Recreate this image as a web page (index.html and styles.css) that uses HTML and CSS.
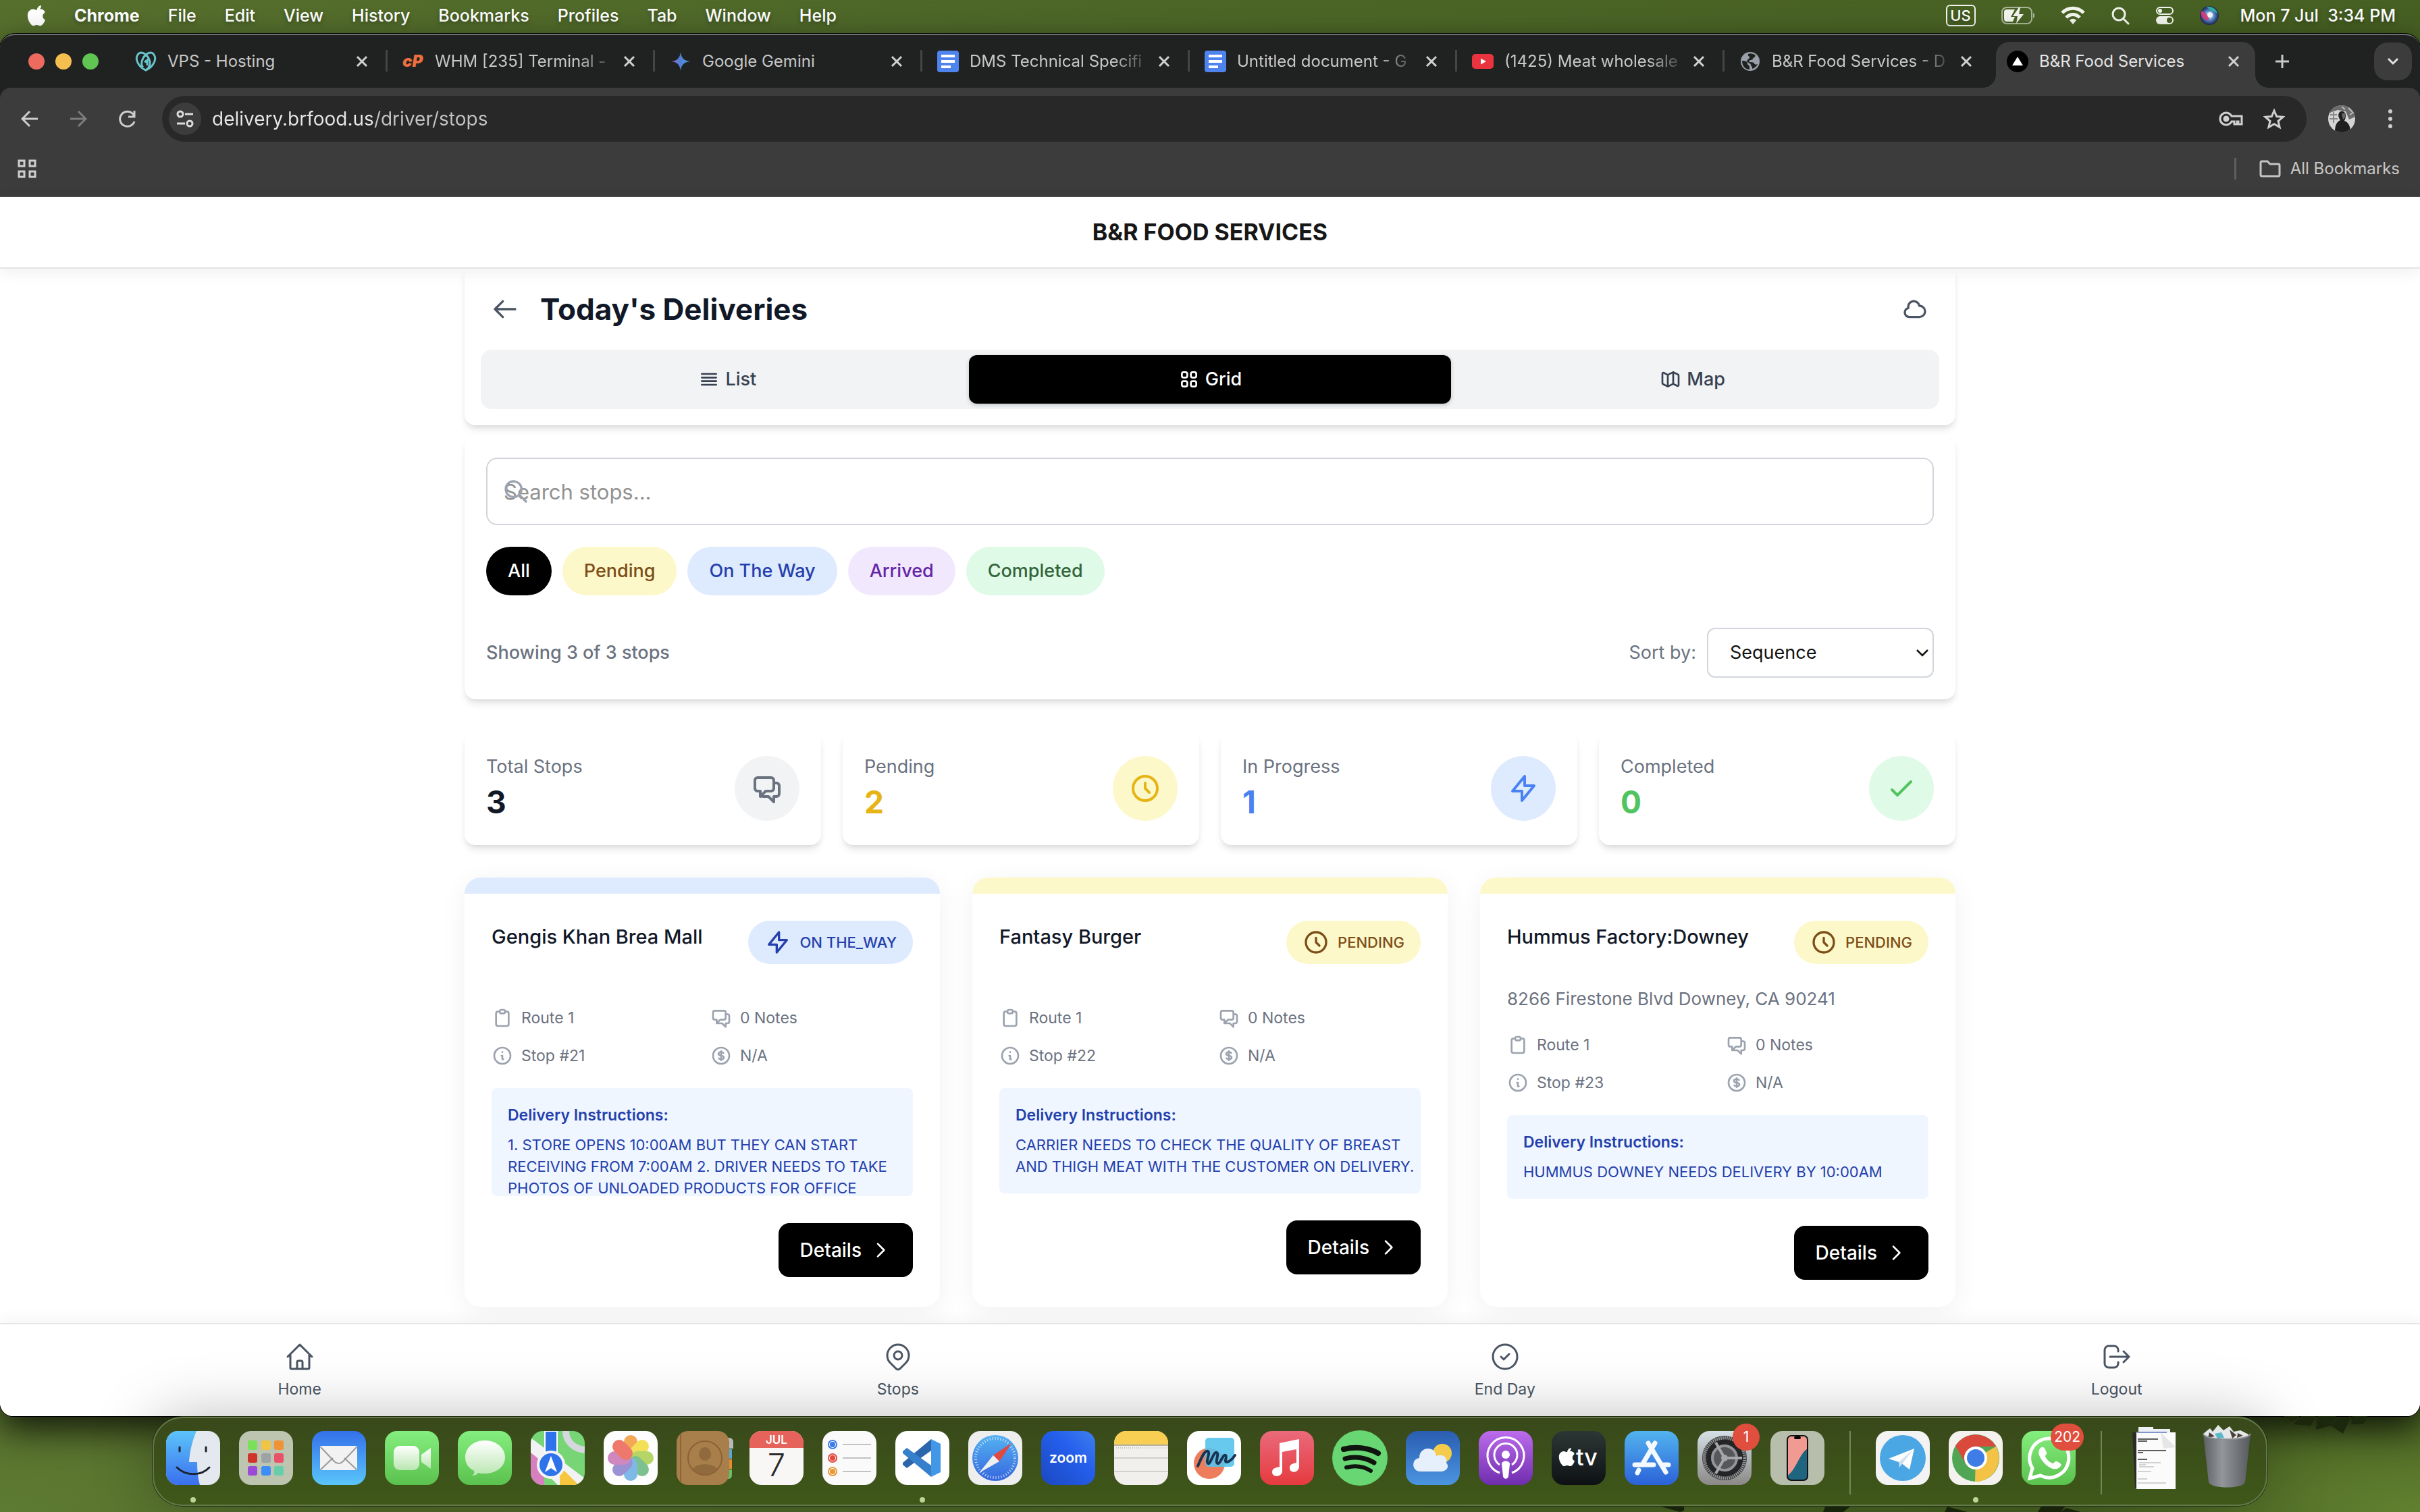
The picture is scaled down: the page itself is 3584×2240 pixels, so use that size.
FILE: index.html
```html
<!DOCTYPE html>
<html lang="en">
<head>
<meta charset="utf-8">
<meta name="viewport" content="width=device-width, initial-scale=1">
<title>B&amp;R Food Services</title>
<link rel="stylesheet" href="styles.css">
</head>
<body>
<svg class="defs" aria-hidden="true">
  <symbol id="i-close" viewBox="0 0 24 24"><path d="M5 5l14 14M19 5L5 19"/></symbol>
  <symbol id="i-chat" viewBox="0 0 24 24"><path d="M17 8h2a2 2 0 012 2v6a2 2 0 01-2 2h-2v4l-4-4H9a1.994 1.994 0 01-1.414-.586m0 0L11 14h4a2 2 0 002-2V6a2 2 0 00-2-2H5a2 2 0 00-2 2v6a2 2 0 002 2h2v4l.586-.586z"/></symbol>
  <symbol id="i-bolt" viewBox="0 0 24 24"><path d="M13 10V3L4 14h7v7l9-11h-7z"/></symbol>
  <symbol id="i-clock" viewBox="0 0 24 24"><path d="M12 8v4l3 3m6-3a9 9 0 11-18 0 9 9 0 0118 0z"/></symbol>
  <symbol id="i-clip" viewBox="0 0 24 24"><path d="M9 5H7a2 2 0 00-2 2v12a2 2 0 002 2h10a2 2 0 002-2V7a2 2 0 00-2-2h-2M9 5a2 2 0 002 2h2a2 2 0 002-2M9 5a2 2 0 012-2h2a2 2 0 012 2"/></symbol>
  <symbol id="i-info" viewBox="0 0 24 24"><path d="M13 16h-1v-4h-1m1-4h.01M21 12a9 9 0 11-18 0 9 9 0 0118 0z"/></symbol>
  <symbol id="i-dollar" viewBox="0 0 24 24"><path d="M12 8c-1.657 0-3 .895-3 2s1.343 2 3 2 3 .895 3 2-1.343 2-3 2m0-8c1.11 0 2.08.402 2.599 1M12 8V7m0 1v8m0 0v1m0-1c-1.11 0-2.08-.402-2.599-1M21 12a9 9 0 11-18 0 9 9 0 0118 0z"/></symbol>
  <symbol id="i-next" viewBox="0 0 24 24"><path d="M9 5l7 7-7 7"/></symbol>
  <symbol id="i-docs" viewBox="0 0 32 32"><rect width="32" height="32" rx="4" fill="#4f83ee"/><path d="M6 8h20M6 16h20M6 24h14" stroke="#fff" stroke-width="4"/></symbol>
  <symbol id="i-apple" viewBox="0 0 28 32"><path d="M19.4 0c.2 1.900-.5 3.700-1.600 5-1.100 1.400-2.900 2.400-4.600 2.300-.2-1.800.7-3.700 1.700-4.900C16 1.100 17.900.1 19.400 0zM24.700 10.900c-1.900 1.200-2.900 2.900-2.900 5.100 0 2.500 1.400 4.600 3.700 5.500-.5 1.600-1.300 3.200-2.200 4.600-1.400 2-2.800 4-5 4.100-2.100 0-2.800-1.300-5.200-1.300s-3.200 1.200-5.200 1.300c-2.100.1-3.700-2.200-5.100-4.200C0 22 -2.200 14.400.7 9.500 2.100 7 4.700 5.500 7.500 5.400c2 0 4 1.400 5.200 1.400s3.600-1.700 6.100-1.400c1 0 3.900.4 5.900 3.200z" transform="translate(1.500 1)"/></symbol>
</svg>

<header class="menubar">
  <nav class="menus" aria-label="Application menu">
    <svg class="apple" viewBox="0 0 28 32"><use href="#i-apple"/></svg>
    <span class="app-name">Chrome</span><span>File</span><span>Edit</span><span>View</span><span>History</span><span>Bookmarks</span><span>Profiles</span><span>Tab</span><span>Window</span><span>Help</span>
  </nav>
  <div class="status">
    <span class="input-source">US</span>
    <svg width="50" height="26" viewBox="0 0 50 26" fill="none"><rect x="1" y="1" width="44" height="24" rx="7" stroke="#a9b696" stroke-width="2"/><path d="M47 9c3 1 3 7 0 8z" fill="#a9b696"/><path d="M8 4h12l-6 11h6l-3 7H8a4 4 0 01-4-4V8a4 4 0 014-4z" fill="#f2f4ee"/><path d="M26 1L17 14h7l-2 11 11-14h-7l2-10z" fill="#f2f4ee"/></svg>
    <svg width="36" height="28" viewBox="0 0 36 28" fill="none" stroke="#f2f4ee" stroke-width="5"><path d="M2 10c9-9 23-9 32 0M8 17c6-6 14-6 20 0"/><path d="M18 27l-5-6c3-3 7-3 10 0z" fill="#f2f4ee" stroke="none"/></svg>
    <svg width="28" height="28" viewBox="0 0 28 28" fill="none" stroke="#f2f4ee" stroke-width="3" stroke-linecap="round"><circle cx="12" cy="12" r="9"/><path d="M19 19l7 7"/></svg>
    <svg width="28" height="28" viewBox="0 0 28 28" fill="none"><rect x="2" y="2" width="24" height="10" rx="5" stroke="#f2f4ee" stroke-width="2"/><circle cx="7" cy="7" r="3" fill="#f2f4ee"/><rect x="1" y="15" width="26" height="12" rx="6" fill="#f2f4ee"/><circle cx="21" cy="21" r="4" fill="#47601f"/></svg>
    <svg width="28" height="28" viewBox="0 0 28 28"><defs><radialGradient id="siri"><stop offset="0" stop-color="#fff"/><stop offset=".35" stop-color="#7fb6e0"/><stop offset=".7" stop-color="#3b5fa0"/><stop offset="1" stop-color="#23264a"/></radialGradient></defs><circle cx="14" cy="14" r="14" fill="url(#siri)"/><path d="M2 7c7 2 11 7 12 14-7 1-14-4-12-14z" fill="#d63b7c" opacity=".9"/><path d="M10 1c8-1 15 4 16 10-6-4-11-4-16-10z" fill="#33b6a5" opacity=".9"/><circle cx="15" cy="13" r="4" fill="#fff" opacity=".8"/></svg>
    <time class="clock">Mon 7 Jul&nbsp; 3:34 PM</time>
  </div>
</header>

<div class="window">
  <div class="tabstrip">
    <div class="lights"><i class="red"></i><i class="amber"></i><i class="green"></i></div>
    <div class="tab"><svg class="favicon" viewBox="0 0 32 32" fill="none" stroke="#67c4cc" stroke-width="3"><path d="M16 29C6 25-1 13 4 6c4-6 12-2 16 5 3 6 3 13-4 18zM16 29c10-4 17-16 12-23-4-6-12-2-16 5-3 6-3 11 0 14M14 17l4-3v8"/></svg><span class="tab-title">VPS - Hosting</span><button class="tab-close" aria-label="Close tab"><svg><use href="#i-close"/></svg></button></div>
    <div class="tab"><span class="favicon cpanel">cP</span><span class="tab-title fade">WHM [235] Terminal -</span><button class="tab-close" aria-label="Close tab"><svg><use href="#i-close"/></svg></button></div>
    <div class="tab"><svg class="favicon" viewBox="0 0 32 32"><defs><linearGradient id="gem"><stop offset="0" stop-color="#9067c9"/><stop offset=".5" stop-color="#4f82d8"/><stop offset="1" stop-color="#4fa0d8"/></linearGradient></defs><path d="M16 2c1 9 5 13 14 14-9 1-13 5-14 14C15 21 11 17 2 16c9-1 13-5 14-14z" fill="url(#gem)"/></svg><span class="tab-title">Google Gemini</span><button class="tab-close" aria-label="Close tab"><svg><use href="#i-close"/></svg></button></div>
    <div class="tab"><svg class="favicon"><use href="#i-docs"/></svg><span class="tab-title fade">DMS Technical Specifi</span><button class="tab-close" aria-label="Close tab"><svg><use href="#i-close"/></svg></button></div>
    <div class="tab"><svg class="favicon"><use href="#i-docs"/></svg><span class="tab-title fade">Untitled document - G</span><button class="tab-close" aria-label="Close tab"><svg><use href="#i-close"/></svg></button></div>
    <div class="tab"><svg class="favicon" viewBox="0 0 32 32"><rect y="5" width="32" height="22" rx="5" fill="#e9333f"/><path d="M13 11.500v9l8-4.500z" fill="#fff"/></svg><span class="tab-title fade">(1425) Meat wholesale</span><button class="tab-close" aria-label="Close tab"><svg><use href="#i-close"/></svg></button></div>
    <div class="tab tab-last"><svg class="favicon" viewBox="0 0 32 32"><circle cx="16" cy="16" r="14" fill="#9aa0a9"/><path d="M4 15c5 0 8 1 8 4s3 2 3 5v4C9 28 4 23 4 15zM13 5c3-2 8 0 10 1 2 3-2 4-3 6-1 3-5 1-6 4 2 2 6 0 8 3s4 1 5 1c-2 4-5 6-8 7 1-3-2-4-2-6s-4-3-6-5c0-3 5-4 4-7-1-1-3-1-2-4z" fill="#202221"/></svg><span class="tab-title fade">B&amp;R Food Services - D</span><button class="tab-close" aria-label="Close tab"><svg><use href="#i-close"/></svg></button></div>
    <div class="tab tab-active"><svg class="favicon" viewBox="0 0 32 32"><circle cx="16" cy="16" r="16" fill="#000"/><path d="M16 9l8 13H8z" fill="#fff"/></svg><span class="tab-title">B&amp;R Food Services</span><button class="tab-close" aria-label="Close tab"><svg><use href="#i-close"/></svg></button></div>
    <button class="new-tab" aria-label="New tab"><svg width="22" height="22" viewBox="0 0 22 22"><path d="M11 1v20M1 11h20" stroke="#c9c9c9" stroke-width="3"/></svg></button>
    <button class="tab-search" aria-label="Search tabs"><svg width="18" height="12" viewBox="0 0 18 12" fill="none"><path d="M2 2l7 7 7-7" stroke="#e0e0e0" stroke-width="3"/></svg></button>
  </div>

  <div class="toolbar">
    <div class="address-row">
      <button class="tool" aria-label="Back"><svg width="26" height="26" viewBox="0 0 26 26"><path d="M25 13H3M13 2L2 13l11 11"/></svg></button>
      <button class="tool dim" aria-label="Forward"><svg width="26" height="26" viewBox="0 0 26 26"><path d="M1 13h22M13 2l11 11-11 11"/></svg></button>
      <button class="tool" aria-label="Reload"><svg width="26" height="26" viewBox="0 0 26 26"><path d="M24 17A11 11 0 1122 6l2 3M24 1v9h-9"/></svg></button>
      <div class="omnibox">
        <button class="site-info" aria-label="Site information"><svg width="26" height="26" viewBox="0 0 26 26" fill="none" stroke="#dcdcdc" stroke-width="3"><circle cx="6" cy="6" r="4"/><path d="M13 6h12M1 20h12"/><circle cx="20" cy="20" r="4"/></svg></button>
        <input class="url" type="text" aria-label="Address" value="delivery.brfood.us/driver/stops">
        <button class="plain" aria-label="Passwords"><svg width="36" height="24" viewBox="0 0 36 24" fill="none" stroke="#cfcfcf" stroke-width="3"><path d="M19 8A9 9 0 1019 16h4v4h4v-4h2v4h5V8z"/><circle cx="11" cy="12" r="3" fill="#cfcfcf"/></svg></button>
        <button class="plain" aria-label="Bookmark this page"><svg width="32" height="32" viewBox="0 0 32 32" fill="none" stroke="#cfcfcf" stroke-width="3"><path d="M16 4l3.700 8.500 9.300.8-7 6.100 2.100 9.100L16 23.700l-8.100 4.800L10 19.400l-7-6.100 9.300-.8z"/></svg></button>
      </div>
      <button class="plain avatar" aria-label="Profile"><svg width="40" height="40" viewBox="0 0 40 40"><defs><clipPath id="av"><circle cx="20" cy="20" r="20"/></clipPath></defs><g clip-path="url(#av)"><rect width="40" height="40" fill="#d4d4d4"/><path d="M0 0h40v17L31 21 26 9 14 7 0 12z" fill="#6c6c6c"/><path d="M3 14h10M2 20h12M8 10v16" stroke="#888" stroke-width="2"/><path d="M30 4l6 6M32 14l6-4M20 2l5 4" stroke="#bbb" stroke-width="2"/><path d="M10 40c0-10 2-15 8-18-3-4-4-9-1-12 4-3 9 0 9 5 0 3-1 6-2 8 6 2 9 8 9 17z" fill="#1f1f1f"/><path d="M20 12h5v6l-3 3z" fill="#6a6a6a"/></g></svg></button>
      <button class="plain" aria-label="Menu"><svg width="8" height="28" viewBox="0 0 8 28" fill="#cfcfcf"><circle cx="4" cy="3" r="3"/><circle cx="4" cy="14" r="3"/><circle cx="4" cy="25" r="3"/></svg></button>
    </div>
    <div class="bookmarks">
      <button class="plain" aria-label="Apps"><svg width="28" height="28" viewBox="0 0 28 28" fill="none" stroke="#cfcfcf" stroke-width="3"><path d="M2 2h8v8H2zM18 2h8v8h-8zM2 18h8v8H2zM18 18h8v8h-8z"/></svg></button>
      <button class="plain all-bookmarks"><svg width="32" height="26" viewBox="0 0 32 26" fill="none" stroke="#c4c4c4" stroke-width="3"><path d="M2 4a2 2 0 012-2h8l4 4h12a2 2 0 012 2v14a2 2 0 01-2 2H4a2 2 0 01-2-2z"/></svg>All Bookmarks</button>
    </div>
  </div>

  <div class="page">
    <header class="site-header"><span class="brand">B&amp;R FOOD SERVICES</span></header>

    <main class="content">
      <section class="panel heading">
        <div class="title-row">
          <a class="icon-link" href="#" aria-label="Back"><svg class="ico s40" viewBox="0 0 24 24"><path d="M10 19l-7-7m0 0l7-7m-7 7h18"/></svg></a>
          <h1>Today's Deliveries</h1>
          <svg class="ico s40" viewBox="0 0 24 24"><path d="M3 15a4 4 0 004 4h9a5 5 0 10-.1-9.999 5.002 5.002 0 10-9.780 2.096A4.001 4.001 0 003 15z"/></svg>
        </div>
        <div class="segments">
          <button class="segment"><svg class="ico s32" viewBox="0 0 24 24"><path d="M4 6h16M4 10h16M4 14h16M4 18h16"/></svg>List</button>
          <button class="segment on"><svg class="ico s32" viewBox="0 0 24 24"><path d="M4 6a2 2 0 012-2h2a2 2 0 012 2v2a2 2 0 01-2 2H6a2 2 0 01-2-2V6zM14 6a2 2 0 012-2h2a2 2 0 012 2v2a2 2 0 01-2 2h-2a2 2 0 01-2-2V6zM4 16a2 2 0 012-2h2a2 2 0 012 2v2a2 2 0 01-2 2H6a2 2 0 01-2-2v-2zM14 16a2 2 0 012-2h2a2 2 0 012 2v2a2 2 0 01-2 2h-2a2 2 0 01-2-2v-2z"/></svg>Grid</button>
          <button class="segment"><svg class="ico s32" viewBox="0 0 24 24"><path d="M9 20l-5.447-2.724A1 1 0 013 16.382V5.618a1 1 0 011.447-.894L9 7m0 13l6-3m-6 3V7m6 10l4.553 2.276A1 1 0 0021 18.382V7.618a1 1 0 00-.553-.894L15 4m0 13V4m0 0L9 7"/></svg>Map</button>
        </div>
      </section>

      <section class="panel filters">
        <div class="search">
          <input type="text" placeholder="Search stops..." aria-label="Search stops">
          <svg class="ico s40 search-icon" viewBox="0 0 24 24"><path d="M21 21l-6-6m2-5a7 7 0 11-14 0 7 7 0 0114 0z"/></svg>
        </div>
        <div class="chips">
          <button class="chip black">All</button><button class="chip yellow">Pending</button><button class="chip blue">On The Way</button><button class="chip purple">Arrived</button><button class="chip green">Completed</button>
        </div>
        <div class="sort-row">
          <span class="showing">Showing 3 of 3 stops</span>
          <label for="sort">Sort by:</label>
          <div class="select"><select id="sort"><option>Sequence</option><option>Name</option><option>Status</option></select><svg width="20" height="14" viewBox="0 0 20 14" fill="none"><path d="M2 3l8 8 8-8" stroke="#111" stroke-width="2.500"/></svg></div>
        </div>
      </section>

      <section class="stats">
        <div class="panel stat"><div><p>Total Stops</p><strong>3</strong></div><span class="bubble gray"><svg class="ico s48"><use href="#i-chat"/></svg></span></div>
        <div class="panel stat"><div><p>Pending</p><strong class="t-yellow">2</strong></div><span class="bubble b-yellow"><svg class="ico s48"><use href="#i-clock"/></svg></span></div>
        <div class="panel stat"><div><p>In Progress</p><strong class="t-blue">1</strong></div><span class="bubble b-blue"><svg class="ico s48"><use href="#i-bolt"/></svg></span></div>
        <div class="panel stat"><div><p>Completed</p><strong class="t-green">0</strong></div><span class="bubble b-green"><svg class="ico s48" viewBox="0 0 24 24"><path d="M5 13l4 4L19 7"/></svg></span></div>
      </section>

      <section class="cards">
        <article class="card way">
          <div class="card-head"><h2>Gengis Khan Brea Mall</h2><span class="badge blue"><svg class="ico s40"><use href="#i-bolt"/></svg>ON THE_WAY</span></div>
          <p class="address"></p>
          <ul class="facts"><li><svg class="ico s32"><use href="#i-clip"/></svg>Route 1</li><li><svg class="ico s32"><use href="#i-chat"/></svg>0 Notes</li><li><svg class="ico s32"><use href="#i-info"/></svg>Stop #21</li><li><svg class="ico s32"><use href="#i-dollar"/></svg>N/A</li></ul>
          <div class="instructions"><h3>Delivery Instructions:</h3><p>1. STORE OPENS 10:00AM BUT THEY CAN START<br>RECEIVING FROM 7:00AM 2. DRIVER NEEDS TO TAKE<br>PHOTOS OF UNLOADED PRODUCTS FOR OFFICE</p></div>
          <button class="details">Details<svg class="ico s32"><use href="#i-next"/></svg></button>
        </article>
        <article class="card pend">
          <div class="card-head"><h2>Fantasy Burger</h2><span class="badge yellow"><svg class="ico s40"><use href="#i-clock"/></svg>PENDING</span></div>
          <p class="address"></p>
          <ul class="facts"><li><svg class="ico s32"><use href="#i-clip"/></svg>Route 1</li><li><svg class="ico s32"><use href="#i-chat"/></svg>0 Notes</li><li><svg class="ico s32"><use href="#i-info"/></svg>Stop #22</li><li><svg class="ico s32"><use href="#i-dollar"/></svg>N/A</li></ul>
          <div class="instructions"><h3>Delivery Instructions:</h3><p>CARRIER NEEDS TO CHECK THE QUALITY OF BREAST<br>AND THIGH MEAT WITH THE CUSTOMER ON DELIVERY.</p></div>
          <button class="details">Details<svg class="ico s32"><use href="#i-next"/></svg></button>
        </article>
        <article class="card pend">
          <div class="card-head"><h2>Hummus Factory:Downey</h2><span class="badge yellow"><svg class="ico s40"><use href="#i-clock"/></svg>PENDING</span></div>
          <p class="address">8266 Firestone Blvd Downey, CA 90241</p>
          <ul class="facts"><li><svg class="ico s32"><use href="#i-clip"/></svg>Route 1</li><li><svg class="ico s32"><use href="#i-chat"/></svg>0 Notes</li><li><svg class="ico s32"><use href="#i-info"/></svg>Stop #23</li><li><svg class="ico s32"><use href="#i-dollar"/></svg>N/A</li></ul>
          <div class="instructions"><h3>Delivery Instructions:</h3><p>HUMMUS DOWNEY NEEDS DELIVERY BY 10:00AM</p></div>
          <button class="details">Details<svg class="ico s32"><use href="#i-next"/></svg></button>
        </article>
      </section>
    </main>

    <nav class="bottom-nav" aria-label="Main">
      <a href="#"><svg class="ico s48 thin" viewBox="0 0 24 24"><path d="M3 12l2-2m0 0l7-7 7 7M5 10v10a1 1 0 001 1h3m10-11l2 2m-2-2v10a1 1 0 01-1 1h-3m-6 0a1 1 0 001-1v-4a1 1 0 011-1h2a1 1 0 011 1v4a1 1 0 001 1m-6 0h6"/></svg>Home</a>
      <a href="#"><svg class="ico s48 thin" viewBox="0 0 24 24"><path d="M17.657 16.657L13.414 20.900a1.998 1.998 0 01-2.827 0l-4.244-4.243a8 8 0 1111.314 0z"/><path d="M15 11a3 3 0 11-6 0 3 3 0 016 0z"/></svg>Stops</a>
      <a href="#"><svg class="ico s48 thin" viewBox="0 0 24 24"><path d="M9 12l2 2 4-4m6 2a9 9 0 11-18 0 9 9 0 0118 0z"/></svg>End Day</a>
      <a href="#"><svg class="ico s48 thin" viewBox="0 0 24 24"><path d="M17 16l4-4m0 0l-4-4m4 4H7m6 4v1a3 3 0 01-3 3H6a3 3 0 01-3-3V7a3 3 0 013-3h4a3 3 0 013 3v1"/></svg>Logout</a>
    </nav>
  </div>
</div>

<svg class="leaves" viewBox="0 0 1200 142" aria-hidden="true"><path d="M998 0h24l-12 8zM1024 0h22l-8 14-26-2zM1048 0h28l-8 14-22 6zM1076 4l22-4-12 26-18-12zM1100 0h22l-6 12-18 0zM76 134h34v6l-6 2zM320 132l36 2-10 8h-30zM500 134l30 8h-34zM640 132h36l-8 10h-34zM676 136l22 6h-30z" fill="#1c280e"/></svg>

<footer class="dock">
  <div class="app running"><svg viewBox="0 0 80 80"><defs><linearGradient id="g1" x2="0" y2="1"><stop offset="0" stop-color="#5cc4fa"/><stop offset="1" stop-color="#3a6fee"/></linearGradient></defs><rect width="80" height="80" rx="18" fill="#e4e9ef"/><path d="M18 0h27c-6 14-10 30-11 46h12c0 12 1 24 4 34H18A18 18 0 010 62V18A18 18 0 0118 0z" fill="url(#g1)"/><path d="M20 24v6M59 24v6M16 54c13 13 36 13 48 0" fill="none" stroke="#1b2430" stroke-width="3" stroke-linecap="round"/></svg></div>
  <div class="app"><svg viewBox="0 0 80 80"><rect width="80" height="80" rx="18" fill="#bdc4b0"/><g><rect x="13" y="14" width="14" height="14" rx="3" fill="#7ae05a"/><rect x="33" y="14" width="14" height="14" rx="3" fill="#f2c443"/><rect x="52" y="14" width="14" height="14" rx="3" fill="#ee9437"/><rect x="13" y="33" width="14" height="14" rx="3" fill="#cf3329"/><rect x="33" y="33" width="14" height="14" rx="3" fill="#9da2a5"/><rect x="52" y="33" width="14" height="14" rx="3" fill="#e8516a"/><rect x="13" y="52" width="14" height="14" rx="3" fill="#9a4ad6"/><rect x="33" y="52" width="14" height="14" rx="3" fill="#3c8df5"/><rect x="52" y="52" width="14" height="14" rx="3" fill="#68cdab"/></g></svg></div>
  <div class="app"><svg viewBox="0 0 80 80"><defs><linearGradient id="g2" x2="0" y2="1"><stop offset="0" stop-color="#3470ea"/><stop offset="1" stop-color="#5ac6fa"/></linearGradient></defs><rect width="80" height="80" rx="18" fill="url(#g2)"/><rect x="12" y="22" width="55" height="36" rx="3" fill="#f2f2f2"/><path d="M13 24l20 21c4 4 9 4 13 0l20-21M13 57l18-17M66 57L48 40" fill="none" stroke="#9a9a9a" stroke-width="2"/></svg></div>
  <div class="app"><svg viewBox="0 0 80 80"><defs><linearGradient id="g3" x2="0" y2="1"><stop offset="0" stop-color="#84ee7e"/><stop offset="1" stop-color="#5bc14e"/></linearGradient><linearGradient id="g4" x2="0" y2="1"><stop offset="0" stop-color="#fff"/><stop offset="1" stop-color="#b9e6b0"/></linearGradient></defs><rect width="80" height="80" rx="18" fill="url(#g3)"/><rect x="13" y="22" width="38" height="36" rx="9" fill="url(#g4)"/><path d="M54 35l14-10v31L54 46z" fill="url(#g4)"/></svg></div>
  <div class="app"><svg viewBox="0 0 80 80"><rect width="80" height="80" rx="18" fill="url(#g3)"/><path d="M40 14c17 0 30 11 30 25S57 63 40 63c-4 0-7 0-10-1-2 3-5 4-9 4 3-2 4-4 3-7-8-4-13-11-13-20 0-14 12-25 29-25z" fill="url(#g4)"/></svg></div>
  <div class="app"><svg viewBox="0 0 80 80"><defs><clipPath id="c1"><rect width="80" height="80" rx="18"/></clipPath></defs><g clip-path="url(#c1)"><rect width="80" height="80" fill="#77d576"/><path d="M0 10l80 60v10H40L0 40z" fill="#f2f2f4"/><path d="M0 32l20 16v32H0z" fill="#d87fc0"/><path d="M43 52l28 28H43z" fill="#f5c63e"/><path d="M52 0c0 16 12 26 28 28" fill="none" stroke="#d5d7de" stroke-width="10"/><rect x="21" width="18" height="40" fill="#2f73ea" stroke="#fff" stroke-width="2"/><circle cx="30" cy="50" r="19" fill="#2f73ea" stroke="#f4f4f4" stroke-width="4"/><path d="M30 37l9 24-9-6-9 6z" fill="#fff"/></g></svg></div>
  <div class="app"><svg viewBox="0 0 80 80"><rect width="80" height="80" rx="18" fill="#fdfdfd"/><g opacity=".85"><rect x="30" y="6" width="20" height="34" rx="10" fill="#f29a38"/><rect x="30" y="6" width="20" height="34" rx="10" fill="#f0dc3c" transform="rotate(45 40 40)"/><rect x="30" y="6" width="20" height="34" rx="10" fill="#a9d04c" transform="rotate(90 40 40)"/><rect x="30" y="6" width="20" height="34" rx="10" fill="#67b77d" transform="rotate(135 40 40)"/><rect x="30" y="6" width="20" height="34" rx="10" fill="#6aaee4" transform="rotate(180 40 40)"/><rect x="30" y="6" width="20" height="34" rx="10" fill="#8a80cc" transform="rotate(225 40 40)"/><rect x="30" y="6" width="20" height="34" rx="10" fill="#c774b4" transform="rotate(270 40 40)"/><rect x="30" y="6" width="20" height="34" rx="10" fill="#ec6152" transform="rotate(315 40 40)"/></g></svg></div>
  <div class="app"><svg viewBox="0 0 80 80"><path d="M66 10h12a6 6 0 016 6v10H66z" fill="#b9bab8"/><path d="M66 27h16v14H66z" fill="#5ba7d6"/><path d="M66 42h16v14H66z" fill="#e28b33"/><path d="M66 57h16v8q0 6-6 6H66z" fill="#67c267"/><rect width="78" height="80" rx="17" fill="#a87f4b"/><path d="M6 4v72" stroke="#8d6538" stroke-width="2"/><g fill="none" stroke="#8a6235" stroke-width="2"><circle cx="42" cy="40" r="25"/></g><ellipse cx="42" cy="34" rx="9" ry="10" fill="#906a3d"/><path d="M24 56c6-9 30-9 36 0-9 11-27 11-36 0z" fill="#906a3d"/></svg></div>
  <div class="app"><svg viewBox="0 0 80 80"><rect width="80" height="80" rx="18" fill="#f8f7f5"/><path d="M0 25v-7A18 18 0 0118 0h44a18 18 0 0118 18v7z" fill="#e5635a"/><text x="40" y="19" text-anchor="middle" class="cal-month">JUL</text><text x="40" y="67" text-anchor="middle" class="cal-day">7</text></svg></div>
  <div class="app"><svg viewBox="0 0 80 80"><rect width="80" height="80" rx="18" fill="#fafafa"/><g stroke="#c3c3c5" stroke-width="2"><path d="M30 20h42M30 40h42M30 60h42"/></g><g fill="none" stroke-width="2"><circle cx="15" cy="20" r="6" stroke="#3a7ced"/><circle cx="15" cy="40" r="6" stroke="#e14b40"/><circle cx="15" cy="60" r="6" stroke="#e79a38"/></g><circle cx="15" cy="20" r="4" fill="#3a7ced"/><circle cx="15" cy="40" r="4" fill="#e14b40"/><circle cx="15" cy="60" r="4" fill="#e79a38"/></svg></div>
  <div class="app running"><svg viewBox="0 0 80 80"><rect width="80" height="80" rx="18" fill="#fff"/><path d="M53 12v17L17 55l-6-5v-3z" fill="#2b66ad"/><path d="M53 68V51L17 25l-6 5v3z" fill="#357fcb"/><path d="M53 12l14 7v42l-14 7z" fill="#4297e6"/></svg></div>
  <div class="app"><svg viewBox="0 0 80 80"><defs><linearGradient id="g5" x2="0" y2="1"><stop offset="0" stop-color="#55b2f2"/><stop offset="1" stop-color="#3567de"/></linearGradient></defs><rect width="80" height="80" rx="18" fill="#eeeeee"/><circle cx="40" cy="40" r="34" fill="url(#g5)"/><circle cx="40" cy="40" r="29" fill="none" stroke="#d5e6fa" stroke-width="4" stroke-dasharray="1 3"/><path d="M64 18L46 45l-9-9z" fill="#e2483d"/><path d="M16 62l21-26 9 9z" fill="#f0f0f0"/></svg></div>
  <div class="app"><svg viewBox="0 0 80 80"><defs><linearGradient id="g6" x1="1" x2="0" y2="1"><stop offset="0" stop-color="#3f80ef"/><stop offset=".4" stop-color="#245fec"/><stop offset="1" stop-color="#1b48c0"/></linearGradient></defs><rect width="80" height="80" rx="18" fill="url(#g6)"/><text x="40" y="47" text-anchor="middle" class="zoom-word">zoom</text></svg></div>
  <div class="app"><svg viewBox="0 0 80 80"><rect width="80" height="80" rx="18" fill="#f1f0ec"/><path d="M0 20v-2A18 18 0 0118 0h44a18 18 0 0118 18v2z" fill="#f8cf52"/><path d="M0 21h80" stroke="#b5b09f" stroke-width="2"/><path d="M0 40h80M0 60h80" stroke="#d3d1cc" stroke-width="2"/><path d="M3 25h76" stroke="#c5c3be" stroke-width="2" stroke-dasharray="1 2"/></svg></div>
  <div class="app"><svg viewBox="0 0 80 80"><rect width="80" height="80" rx="18" fill="#fff"/><circle cx="33" cy="48" r="23" fill="#ee7d5c"/><rect x="27" y="10" width="43" height="43" rx="5" fill="#56c3ec" opacity=".9"/><path d="M16 52c5-12 10-24 15-22 4 2-4 16 0 18s8-18 13-16c4 2-3 14 1 16s8-14 12-12c3 2-3 10 2 10 5-1 8-4 12-10" fill="none" stroke="#173553" stroke-width="4" stroke-linecap="round"/></svg></div>
  <div class="app"><svg viewBox="0 0 80 80"><defs><linearGradient id="g7" x2="0" y2="1"><stop offset="0" stop-color="#ea6a7b"/><stop offset="1" stop-color="#e53a3e"/></linearGradient></defs><rect width="80" height="80" rx="18" fill="url(#g7)"/><path d="M29 18l29-6v40c0 11-14 11-14 3 0-6 5-7 10-8V27l-21 4v28c0 10-15 10-15 2 0-6 6-7 11-8z" fill="#fff"/></svg></div>
  <div class="app"><svg viewBox="0 0 80 80"><circle cx="40" cy="40" r="41" fill="#68d673"/><g fill="none" stroke="#10160f" stroke-linecap="round"><path d="M16 27c16-4 36-3 51 6" stroke-width="8"/><path d="M18 41c14-4 30-2 43 6" stroke-width="7"/><path d="M20 54c12-3 25-2 36 5" stroke-width="6"/></g></svg></div>
  <div class="app"><svg viewBox="0 0 80 80"><defs><linearGradient id="g8" x2="0" y2="1"><stop offset="0" stop-color="#2a5db1"/><stop offset="1" stop-color="#4b95e0"/></linearGradient></defs><rect width="80" height="80" rx="18" fill="url(#g8)"/><circle cx="54" cy="33" r="14" fill="#f4cb4b"/><path d="M22 60c-14 0-14-19-2-20 0-18 24-18 25-3 11-4 17 3 15 10 6 8-2 13-8 13z" fill="#e6effc"/></svg></div>
  <div class="app"><svg viewBox="0 0 80 80"><defs><linearGradient id="g9" x2="0" y2="1"><stop offset="0" stop-color="#bc6cec"/><stop offset="1" stop-color="#6f2dae"/></linearGradient></defs><rect width="80" height="80" rx="18" fill="url(#g9)"/><g fill="none" stroke="#fff" stroke-width="3"><path d="M31 62a27 27 0 1118 0M31 50a17 17 0 1118 0"/></g><circle cx="40" cy="35" r="6" fill="#fff"/><path d="M34 49c0-6 12-6 12 0l-2 18c-1 5-7 5-8 0z" fill="#fff"/></svg></div>
  <div class="app"><svg viewBox="0 0 80 80"><defs><linearGradient id="g10" x2="0" y2="1"><stop offset="0" stop-color="#2c3734"/><stop offset="1" stop-color="#0e1114"/></linearGradient></defs><rect width="80" height="80" rx="18" fill="url(#g10)"/><svg x="10" y="24" width="25" height="29" viewBox="0 0 28 32" fill="#fff"><use href="#i-apple"/></svg><text x="36" y="51" class="tv-word">tv</text></svg></div>
  <div class="app"><svg viewBox="0 0 80 80"><defs><linearGradient id="g11" x2="0" y2="1"><stop offset="0" stop-color="#53b3ef"/><stop offset="1" stop-color="#2b62d8"/></linearGradient></defs><rect width="80" height="80" rx="18" fill="url(#g11)"/><g stroke="#f4f8ff" stroke-width="7" stroke-linecap="round"><path d="M45 18L26 50M35 18l26 43M15 50h28M57 50h8M21 58l-2 4"/></g></svg></div>
  <div class="app"><svg viewBox="0 0 80 80"><defs><linearGradient id="g12" x2="0" y2="1"><stop offset="0" stop-color="#d4e0e6"/><stop offset="1" stop-color="#8b8987"/></linearGradient></defs><rect width="80" height="80" rx="18" fill="url(#g12)"/><circle cx="40" cy="40" r="33" fill="#242527"/><circle cx="40" cy="40" r="30" fill="none" stroke="#8f9193" stroke-width="5" stroke-dasharray="2 1"/><circle cx="40" cy="40" r="18" fill="#55575a" stroke="#939598" stroke-width="4"/><path d="M40 40h26M40 40L27 17M40 40L27 63" stroke="#a5a7a9" stroke-width="4"/><circle cx="40" cy="40" r="5" fill="#a5a7a9"/></svg><span class="count">1</span></div>
  <div class="app"><svg viewBox="0 0 80 80"><rect width="80" height="80" rx="18" fill="#b7beac"/><rect x="24" y="6" width="32" height="68" rx="7" fill="#111"/><path d="M26 13a5 5 0 015-5h18a5 5 0 015 5v14C42 36 40 56 26 66z" fill="#f19a92"/><path d="M54 27v40a5 5 0 01-5 5H31a5 5 0 01-5-5v-1C38 56 42 36 54 27z" fill="#1f6580"/><rect x="35" y="8" width="10" height="4" rx="2" fill="#000"/></svg></div>
  <span class="divider"></span>
  <div class="app"><svg viewBox="0 0 80 80"><rect width="80" height="80" rx="18" fill="#f3f3f4"/><circle cx="40" cy="40" r="34" fill="#4ba6e4"/><path d="M19 41l38-15-7 31-13-10z" fill="#fff"/><path d="M55 28L34 46l1 8z" fill="#cfe0f0"/></svg></div>
  <div class="app running"><svg viewBox="0 0 80 80"><rect width="80" height="80" rx="18" fill="#f3f2ee"/><circle cx="40" cy="40" r="35" fill="#51a656"/><path d="M40 40l30-17a35 35 0 01-31 52z" fill="#f4c244"/><path d="M40 23h30A35 35 0 0010 22l15 26z" fill="#da4a3c"/><circle cx="40" cy="40" r="17" fill="#fff"/><circle cx="40" cy="40" r="13" fill="#3f7de6"/></svg></div>
  <div class="app"><svg viewBox="0 0 80 80"><rect width="80" height="80" rx="18" fill="url(#g3)"/><path d="M12 70l4-15a29 29 0 1112 11z" fill="none" stroke="#fff" stroke-width="5"/><path d="M28 25c4-3 6-1 9 7 1 3-3 4-2 6 3 5 6 8 11 10 3 0 3-4 6-3 7 3 8 5 5 8-6 7-16 2-23-5-7-8-12-17-6-23z" fill="#fff"/></svg><span class="count">202</span></div>
  <span class="divider"></span>
  <div class="app"><svg viewBox="0 0 80 80"><path d="M8 2h62v82H12z" fill="#2a2c2a"/><path d="M17-6h22v3h25v10H17z" fill="#eef0f6"/><rect x="14" y="2" width="58" height="84" fill="#fbfbfb"/><path d="M15 2h44" stroke="#7f97c6" stroke-width="2"/><path d="M16 12h30M16 15h14M16 29h42M16 32h8M16 42h14" stroke="#5d5d5d" stroke-width="2"/><path d="M18 47h32M18 50h10M18 53h22M16 60h20M16 71h14M16 77h42" stroke="#a9a9a9"/><path d="M50 2l22 22-18 2z" fill="#e6e6e6"/></svg></div>
  <div class="app"><svg viewBox="0 0 80 80"><defs><linearGradient id="g13"><stop offset="0" stop-color="#5d6065"/><stop offset=".4" stop-color="#93969a"/><stop offset="1" stop-color="#55585d"/></linearGradient></defs><path d="M5 4l10-8 4 5 8-10 8 8 9-6 6 8 10-2 12 6-2 10H8z" fill="#e5e7e8"/><path d="M14 2l8 6-10 2zM44-2l10 8-6 5zM56 3l8 4-9 3z" fill="#4b4038"/><path d="M22 4l10-2 4 8-10 1z" fill="#59b7c9"/><path d="M5 4c6 11 64 11 70 0l-8 72c-3 10-51 10-54 0z" fill="url(#g13)"/><path d="M5 4c2 11 68 11 70 0" fill="none" stroke="#8b8e92" stroke-width="2"/></svg></div>
</footer>
</body>
</html>
```
FILE: styles.css
```css
* { box-sizing: border-box; margin: 0; padding: 0; }

body {
  min-height: 100vh;
  display: flex;
  flex-direction: column;
  position: relative;
  font-family: Inter, "Liberation Sans", sans-serif;
  font-size: 28px;
  line-height: 40px;
  color: #111827;
  background:
    radial-gradient(ellipse 500px 180px at 100% 100%, #62812f, transparent),
    radial-gradient(ellipse 500px 180px at 0 100%, #5e7b32, transparent),
    linear-gradient(90deg, #566f2d, #4d6728 40%, #465f22);
}
button, input, select { font: inherit; color: inherit; border: 0; background: none; }
button { cursor: pointer; }
a { color: inherit; text-decoration: none; }
ul { list-style: none; }
.defs { position: absolute; width: 0; height: 0; }

/* menu bar */
.menubar {
  display: flex;
  justify-content: space-between;
  align-items: center;
  height: 50px;
  padding: 0 36px 4px 40px;
  font-size: 25px;
  font-weight: 500;
  color: #fff;
  text-shadow: 0 3px 6px rgba(0, 0, 0, .3);
}
.menus { display: flex; align-items: center; gap: 42px; }
.apple { width: 28px; height: 32px; fill: #fff; }
.app-name { font-weight: 700; }
.status { display: flex; align-items: center; gap: 38px; }
.input-source {
  width: 44px;
  height: 32px;
  border: 2px solid #f2f4ee;
  border-radius: 6px;
  font-size: 22px;
  line-height: 28px;
  text-align: center;
}
.clock { margin-left: -6px; white-space: nowrap; }

/* browser window */
.window {
  flex: 1;
  display: flex;
  flex-direction: column;
  border-top: 2px solid #707070;
  border-radius: 22px 22px 20px 20px;
  background: #202221;
  overflow: hidden;
  box-shadow: 0 0 0 1px #000, 0 20px 50px rgba(0, 0, 0, .75);
}
.tabstrip { display: flex; align-items: center; height: 78px; padding-right: 12px; color: #c7c7c7; font-size: 24px; }
.lights { flex: none; display: flex; gap: 16px; width: 178px; padding-left: 42px; }
.lights i { width: 24px; height: 24px; border-radius: 50%; }
.lights .red { background: #ec6a5e; }
.lights .amber { background: #f4bf4f; }
.lights .green { background: #61c554; }
.tab {
  position: relative;
  flex: 0 1 396px;
  min-width: 0;
  display: flex;
  align-items: center;
  height: 78px;
  padding: 0 22px;
}
.tab::after {
  content: "";
  position: absolute;
  right: 0;
  top: 22px;
  width: 3px;
  height: 32px;
  background: #444645;
}
.tab-last::after { content: none; }
.favicon { flex: none; width: 32px; height: 32px; margin-right: 16px; }
.cpanel { color: #ec6f3d; font-size: 24px; font-weight: 900; font-style: italic; line-height: 32px; }
.tab-title {
  flex: 1;
  min-width: 0;
  overflow: hidden;
  white-space: nowrap;
}
.fade {
  -webkit-mask-image: linear-gradient(90deg, #000 calc(100% - 60px), transparent);
  mask-image: linear-gradient(90deg, #000 calc(100% - 60px), transparent);
}
.tab-close { flex: none; width: 32px; height: 32px; display: grid; place-items: center; }
.tab-close svg { width: 24px; height: 24px; stroke: #d0d0d0; stroke-width: 3; }
.tab-active { color: #e4e4e4; z-index: 1; }
.tab-active::before {
  content: "";
  position: absolute;
  z-index: -1;
  inset: 10px 6px 0;
  border-radius: 20px 20px 0 0;
  background: #3c3c3c;
}
.tab-active::after {
  z-index: -1;
  left: -14px;
  right: -14px;
  top: auto;
  bottom: 0;
  width: auto;
  height: 20px;
  background:
    radial-gradient(circle at 0 0, transparent 20px, #3c3c3c 20px) left / 20px 20px no-repeat,
    radial-gradient(circle at 100% 0, transparent 20px, #3c3c3c 20px) right / 20px 20px no-repeat;
}
.new-tab { width: 68px; height: 56px; display: grid; place-items: center; }
.tab-search { width: 56px; height: 56px; margin-left: auto; border-radius: 20px; background: #3c3c3c; display: grid; place-items: center; }

.toolbar { background: #3c3c3c; border-radius: 16px 16px 0 0; border-bottom: 2px solid #494849; padding: 12px 24px 0 8px; }
.address-row { display: flex; align-items: center; }
.tool { width: 72px; height: 68px; display: grid; place-items: center; }
.tool svg { fill: none; stroke: #cdcdcd; stroke-width: 3; }
.dim svg { stroke: #7c7c7c; }
.plain { display: flex; align-items: center; }
.omnibox {
  flex: 1;
  display: flex;
  align-items: center;
  gap: 30px;
  height: 68px;
  margin: 0 28px 0 16px;
  padding: 0 32px 0 10px;
  border-radius: 34px;
  background: #282828;
}
.site-info { width: 48px; height: 48px; border-radius: 50%; background: #3c3c3c; display: grid; place-items: center; }
.url {
  flex: 1;
  min-width: 0;
  margin-left: -14px;
  outline: 0;
  color: transparent;
  background: linear-gradient(90deg, #e8e8e8 238px, #c4c4c4 238px);
  -webkit-background-clip: text;
  background-clip: text;
}
.avatar { margin: 0 48px 0 4px; }
.address-row > .plain:last-child { margin-right: 16px; }
.bookmarks { display: flex; justify-content: space-between; align-items: center; height: 80px; padding: 0 6px 0 18px; }
.all-bookmarks { gap: 14px; height: 32px; padding-left: 34px; border-left: 3px solid #5f5f5f; font-size: 24px; color: #c7c7c7; }

/* page */
.page { flex: 1; display: flex; flex-direction: column; background: #fff; }
.site-header {
  position: relative;
  z-index: 2;
  display: flex;
  justify-content: center;
  align-items: center;
  height: 106px;
  border-bottom: 2px solid #e5e5e5;
  background: #fff;
  box-shadow: 0 4px 24px rgba(0, 0, 0, .07);
}
.brand { font-size: 34px; font-weight: 700; color: #171717; }
.content { flex: 1; width: calc(100% - 96px); max-width: 2208px; margin: 0 auto; padding-bottom: 24px; }
.ico { flex: none; fill: none; stroke: currentColor; stroke-width: 2; stroke-linecap: round; stroke-linejoin: round; }
.s32 { width: 32px; height: 32px; }
.s40 { width: 40px; height: 40px; }
.s48 { width: 48px; height: 48px; }
.thin { stroke-width: 1.5; }
.panel {
  border-radius: 16px;
  background: #fff;
  box-shadow: 0 8px 12px -2px rgba(0, 0, 0, .1), 0 4px 8px -4px rgba(0, 0, 0, .1);
}

.heading { padding: 0 24px 24px; border-radius: 0 0 16px 16px; }
.title-row { display: flex; align-items: center; height: 120px; padding: 0 16px; color: #4b5563; }
.icon-link { display: flex; margin-right: 32px; }
h1 { flex: 1; font-size: 44px; line-height: 56px; font-weight: 700; color: #111827; }
.segments { display: grid; grid-template-columns: repeat(3, 1fr); padding: 8px; border-radius: 16px; background: #f2f3f5; }
.segment { display: flex; align-items: center; justify-content: center; gap: 8px; height: 72px; border-radius: 12px; font-size: 27px; font-weight: 500; color: #374151; }
.segment.on { background: #000; color: #fff; box-shadow: 0 2px 6px rgba(0, 0, 0, .2); }

.filters { margin-top: 16px; padding: 32px; }
.search { position: relative; display: flex; }
.search input { flex: 1; height: 100px; padding: 0 24px; border: 2px solid #d1d5db; border-radius: 16px; font-size: 31px; }
.search input::placeholder { color: #929292; opacity: 1; }
.search-icon { position: absolute; left: 24px; top: 30px; color: #9ca3af; }
.chips { display: flex; flex-wrap: wrap; gap: 16px; margin: 32px 0 48px; }
.chip { height: 72px; padding: 0 32px; border-radius: 36px; font-size: 27px; font-weight: 500; }
.black { background: #000; color: #fff; }
.yellow { background: #fdf8c9; color: #7c4e18; }
.blue { background: #deeafe; color: #2440ac; }
.purple { background: #f2e8fe; color: #6425a6; }
.chip.green { background: #e0fae8; color: #33653a; }
.sort-row { display: flex; align-items: center; gap: 16px; font-size: 27px; color: #6b7280; }
.showing { flex: 1; font-weight: 500; }
.select { position: relative; width: 336px; }
.select select { appearance: none; width: 100%; height: 74px; padding: 0 32px; border: 2px solid #d1d5db; border-radius: 12px; background: #fff; color: #111; }
.select svg { position: absolute; right: 7px; top: 30px; pointer-events: none; }

.stats { display: grid; grid-template-columns: repeat(4, minmax(0, 1fr)); gap: 32px; margin-top: 48px; }
.stat { display: flex; justify-content: space-between; align-items: center; padding: 32px; }
.stat p { font-size: 27px; line-height: 40px; color: #6b7280; }
.stat strong { display: block; font-size: 46px; line-height: 64px; font-weight: 700; }
.bubble { width: 96px; height: 96px; border-radius: 50%; display: grid; place-items: center; }
.gray { background: #f2f3f5; color: #6b7280; }
.b-yellow { background: #fdf8c9; }
.b-blue { background: #deeafe; }
.b-green { background: #e0fae8; }
.t-yellow, .b-yellow { color: #e7b416; }
.t-blue, .b-blue { color: #4a82f2; }
.t-green, .b-green { color: #51c45f; }

.cards { display: grid; grid-template-columns: repeat(3, minmax(0, 1fr)); gap: 48px; margin-top: 48px; }
.card {
  padding: 64px 40px 40px;
  border-radius: 24px;
  background: #fff 0 0 / 100% 24px no-repeat;
  box-shadow: 0 8px 40px rgba(0, 0, 0, .06);
}
.way { background-image: linear-gradient(#deeafe, #deeafe); }
.pend { background-image: linear-gradient(#fdf8c9, #fdf8c9); }
.card-head { display: flex; justify-content: space-between; align-items: flex-start; }
h2 { font-size: 29px; line-height: 48px; font-weight: 500; white-space: nowrap; }
.badge { display: flex; align-items: center; gap: 12px; height: 64px; padding: 0 24px; border-radius: 32px; font-size: 22px; font-weight: 500; white-space: nowrap; }
.address { padding: 32px 0; font-size: 26px; line-height: 40px; color: #6b7280; }
.facts { display: grid; grid-template-columns: 1fr 1fr; gap: 24px; font-size: 23px; line-height: 32px; color: #6b7280; }
.facts li { display: flex; align-items: center; gap: 12px; }
.facts .ico { color: #9ca3af; }
.instructions { max-height: 160px; margin: 32px 0 40px; padding: 24px; border-radius: 8px; background: #eff6ff; color: #2440ac; font-size: 22px; line-height: 32px; overflow: hidden; white-space: nowrap; }
h3 { margin-bottom: 12px; font-size: 23px; font-weight: 600; }
.details { display: flex; align-items: center; gap: 12px; height: 80px; margin-left: auto; padding: 0 32px; border-radius: 16px; background: #000; color: #fff; font-size: 28px; font-weight: 500; }

.bottom-nav {
  position: relative;
  display: flex;
  justify-content: space-around;
  padding: 24px 0;
  border-top: 2px solid #e5e7eb;
  background: #fff;
  box-shadow: 0 -4px 24px rgba(0, 0, 0, .05);
}
.bottom-nav a { display: flex; flex-direction: column; align-items: center; gap: 8px; font-size: 23px; line-height: 32px; color: #4b5563; }

/* dock */
.leaves { position: absolute; right: 0; bottom: 0; width: 1200px; height: 142px; }
.dock {
  position: relative;
  display: flex;
  gap: 28px;
  align-self: center;
  height: 132px;
  margin: 1px 0 9px;
  padding: 19px 18px 0;
  border: 2px solid #64794a;
  border-radius: 44px;
  background: linear-gradient(#39491b, #3f5819);
  box-shadow: 0 0 90px rgba(0, 0, 0, .26), 0 0 0 1px #2a3814;
}
.app { position: relative; flex: none; width: 80px; height: 80px; }
.app > svg { display: block; width: 80px; height: 80px; overflow: visible; }
.running::after { content: ""; position: absolute; left: 36px; bottom: -26px; width: 8px; height: 8px; border-radius: 50%; background: #bcd596; }
.divider { width: 2px; height: 94px; margin: 0 9px; background: #70875a; }
.count { position: absolute; right: -12px; top: -11px; min-width: 40px; height: 40px; padding: 0 5px; border-radius: 20px; background: #e04e3e; color: #fff; font-size: 21px; line-height: 40px; text-align: center; }
.cal-month { font-size: 17px; font-weight: 600; fill: #fff; }
.cal-day { font-size: 47px; font-weight: 300; fill: #2b2b2b; }
.zoom-word { font-size: 21px; font-weight: 600; fill: #fff; }
.tv-word { font-size: 34px; font-weight: 500; fill: #fff; }
```
